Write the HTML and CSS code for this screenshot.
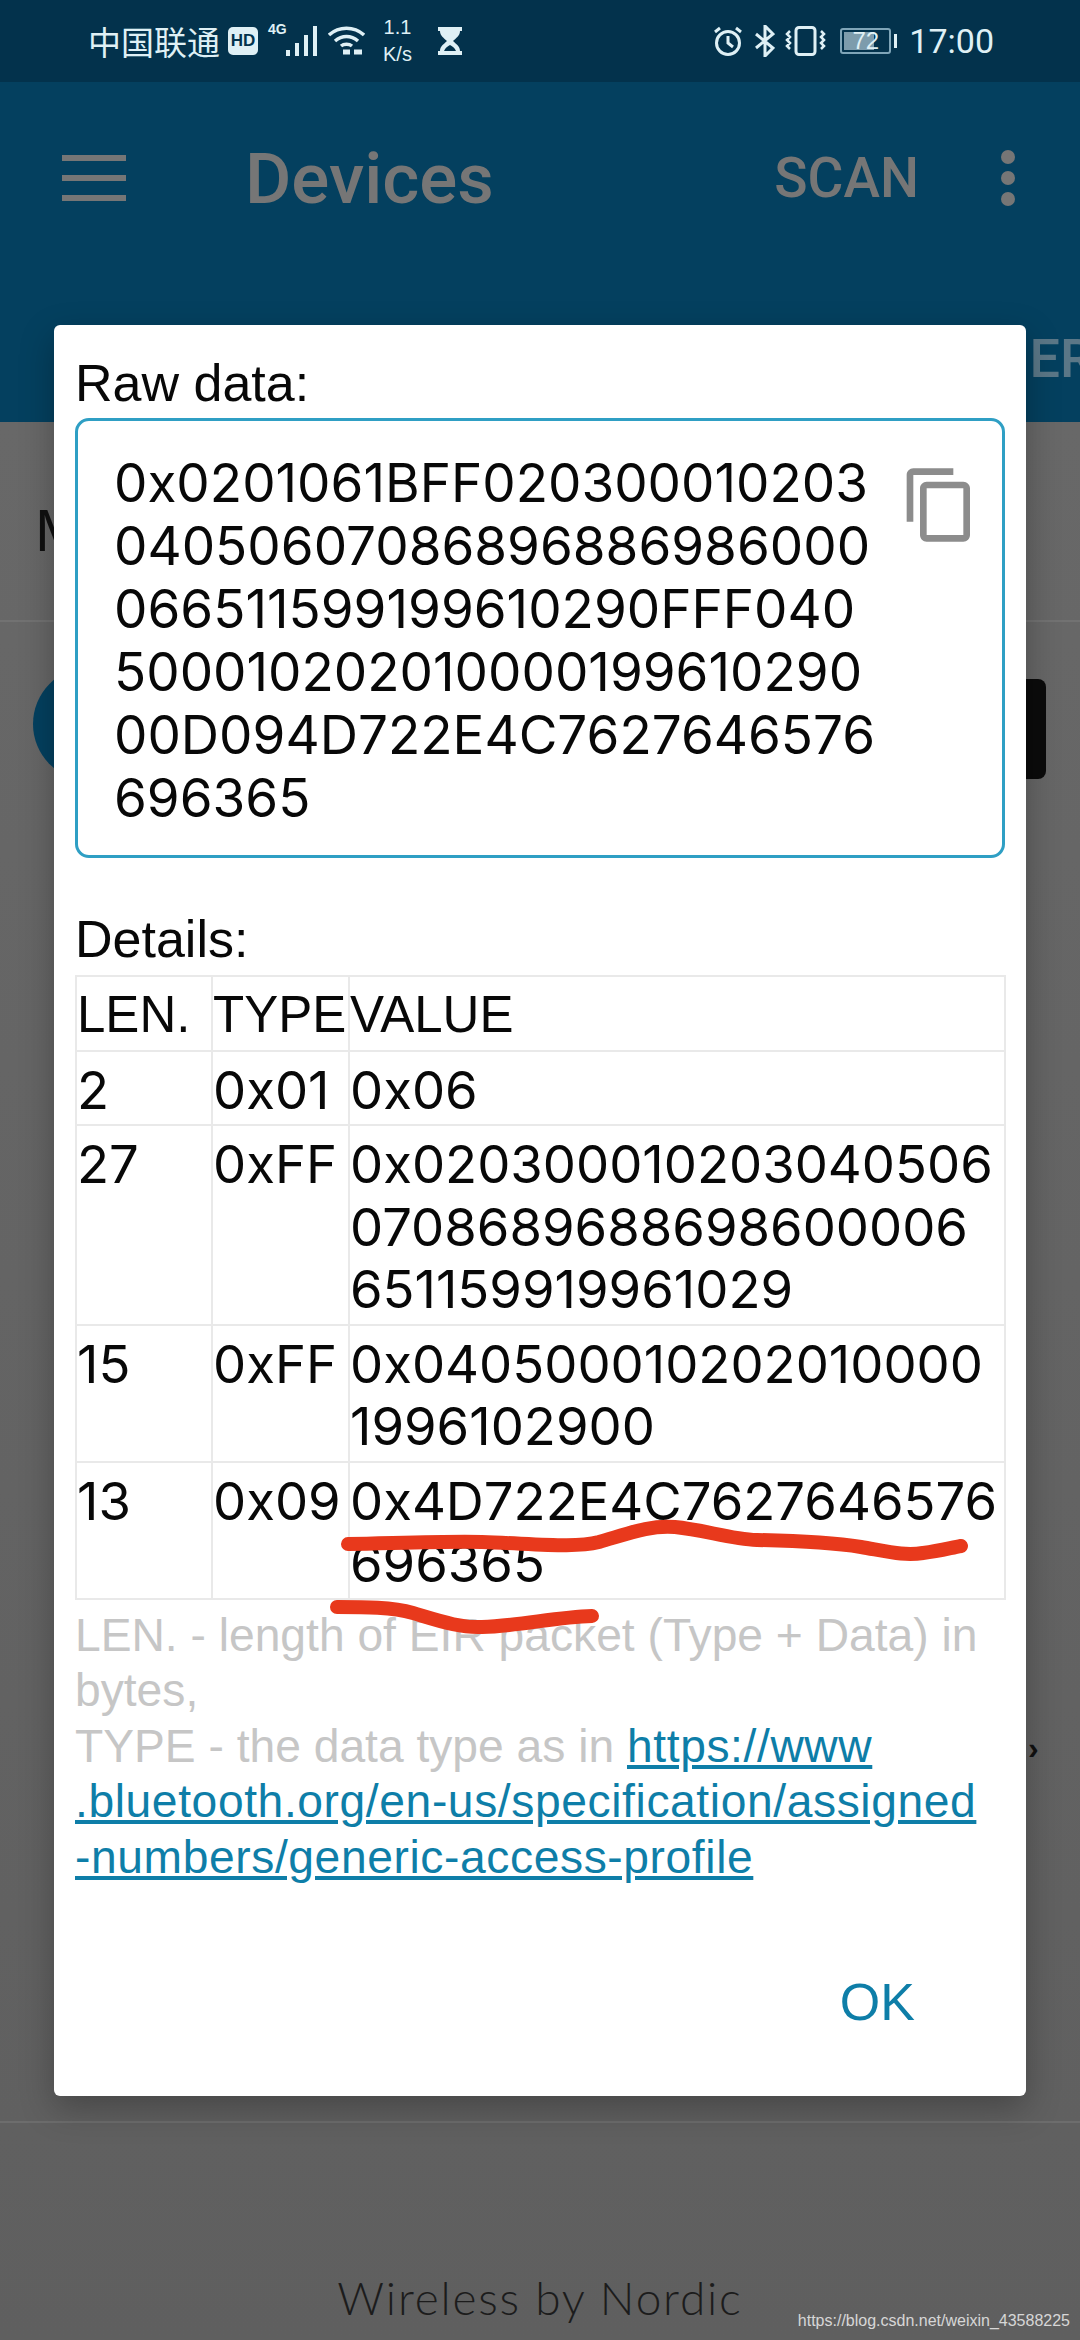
FILE: index.html
```html
<!DOCTYPE html>
<html lang="en">
<head>
<meta charset="UTF-8">
<meta name="viewport" content="width=device-width, initial-scale=1.0">
<title>Devices</title>
<link rel="stylesheet" href="styles.css">
</head>
<body>
<div class="screen">
    <div class="status">
        <div class="status-left">
            <span class="carrier">中国联通</span>
            <span class="hd">HD</span>
            <span class="net">4G</span>
            <svg class="signal" width="32" height="30" viewBox="0 0 32 30"><path d="M0 24h4v6H0zM9 17h4v13H9zM18 9h4v21h-4zM27 0h4v30h-4z" fill="#dff0f5"/></svg>
            <svg class="wifi" width="37" height="30" viewBox="0 0 37 30" fill="none" stroke="#dff0f5" stroke-width="3.5"><path d="M1 9C11 0 26 0 36 9M7 15c7-6 16-6 23 0M13 20c3-2.500 8-2.500 11 0"/><path d="M15 26h7M26 26h8" stroke-width="5"/></svg>
            <span class="speed"><span>1.1</span><span>K/s</span></span>
            <svg class="hourglass" width="24" height="28" viewBox="0 0 24 28"><path d="M0 0h24v4h-2c0 5-4 7-7 10 3 3 7 5 7 10h2v4H0v-4h2c0-5 4-7 7-10C6 11 2 9 2 4H0z" fill="#dff0f5"/><path d="M6 24c1-3 4-5 6-6 2 1 5 3 6 6z" fill="#03324c"/></svg>
        </div>
        <div class="status-right">
            <svg width="30" height="30" viewBox="0 0 30 30" fill="none" stroke="#dff0f5" stroke-width="3"><circle cx="15" cy="17" r="11.500"/><path d="M15 10v7l5 4M2 6l5-4M28 6l-5-4"/></svg>
            <svg class="bt" width="20" height="32" viewBox="0 0 20 32" fill="none" stroke="#dff0f5" stroke-width="3"><path d="M1 9l17 14-8 8V1l8 8L1 23"/></svg>
            <svg class="vibrate" width="41" height="30" viewBox="0 0 41 30" fill="none" stroke="#dff0f5" stroke-width="3"><rect x="11" y="1.500" width="19" height="27" rx="3"/><path d="M5 5l-3 3 3 3-3 3 3 3-3 3 3 3M36 5l3 3-3 3 3 3-3 3 3 3-3 3" stroke-width="2.500"/></svg>
            <div class="battery"><div class="battery-fill"></div><span class="battery-num">72</span></div>
            <div class="battery-nub"></div>
            <span class="clock">17:00</span>
        </div>
    </div>

    <div class="appbar">
        <div class="toolbar">
            <div class="menu"><i></i><i></i><i></i></div>
            <span class="title">Devices</span>
            <span class="scan">SCAN</span>
            <div class="more"><i></i><i></i><i></i></div>
        </div>
        <div class="tab-hint">ER</div>
    </div>

    <div class="list">
        <div class="list-head">M</div>
        <div class="device">
            <div class="device-icon"></div>
            <div class="connect"></div>
        </div>
        <div class="chevron">›</div>
    </div>

    <div class="footer">Wireless by Nordic</div>

    <div class="dialog">
        <div class="label label-raw">Raw data:</div>
        <div class="raw-box">
            <div class="raw-text">
                <div>0x0201061BFF020300010203</div>
                <div>04050607086896886986000</div>
                <div>066511599199610290FFF040</div>
                <div>500010202010000199610290</div>
                <div>00D094D722E4C7627646576</div>
                <div>696365</div>
            </div>
            <svg class="copy" width="80" height="80" viewBox="0 0 24 24"><path d="M16 1H4c-1.100 0-2 .9-2 2v14h2V3h12V1zm3 4H8c-1.100 0-2 .9-2 2v14c0 1.100.9 2 2 2h11c1.100 0 2-.9 2-2V7c0-1.100-.9-2-2-2zm0 16H8V7h11v14z" fill="#8c8c8c"/></svg>
        </div>
        <div class="label label-details">Details:</div>
        <table class="details">
            <tr class="head"><td class="col-len">LEN.</td><td class="col-type">TYPE</td><td>VALUE</td></tr>
            <tr><td>2</td><td>0x01</td><td>0x06</td></tr>
            <tr><td>27</td><td>0xFF</td><td><div>0x020300010203040506</div><div>0708689688698600006</div><div>651159919961029</div></td></tr>
            <tr><td>15</td><td>0xFF</td><td><div>0x040500010202010000</div><div>1996102900</div></td></tr>
            <tr><td>13</td><td>0x09</td><td><div>0x4D722E4C7627646576</div><div>696365</div></td></tr>
        </table>
        <div class="legend">
            <div>LEN. - length of EIR packet (Type + Data) in</div>
            <div>bytes,</div>
            <div>TYPE - the data type as in <a href="#">https://www</a></div>
            <div><a href="#">.bluetooth.org/en-us/specification/assigned</a></div>
            <div><a href="#">-numbers/generic-access-profile</a></div>
        </div>
        <div class="actions"><span class="ok">OK</span></div>
    </div>

    <!-- red marker strokes drawn over the screenshot -->
    <svg class="marks" width="1080" height="2340" viewBox="0 0 1080 2340" fill="none" stroke="#e8391c" stroke-linecap="round">
        <path d="M348 1544C400 1543 450 1541 482 1542C540 1544 575 1548 599 1542C630 1533 650 1525 675 1527C705 1530 730 1539 757 1540C800 1541 835 1543 861 1547C890 1552 905 1556 923 1553C940 1551 950 1548 961 1546" stroke-width="14"/>
        <path d="M337 1607C365 1607 392 1607 413 1613C440 1621 460 1628 482 1627C520 1626 555 1617 592 1616" stroke-width="14"/>
    </svg>

    <div class="watermark">https://blog.csdn.net/weixin_43588225</div>
</div>
</body>
</html>
```

FILE: styles.css
```css
* {
    box-sizing: border-box;
}
body {
    margin: 0;
    font-family: "Liberation Sans", Arial, sans-serif;
    background-color: #666;
}
.screen {
    position: relative;
    width: 1080px;
    height: 2340px;
    overflow: hidden;
    display: flex;
    flex-direction: column;
    background: linear-gradient(#6a6a6a, #5f5f5f);
}

/* status bar */
.status {
    height: 82px;
    flex: none;
    background-color: #03324c;
    color: #dff0f5;
    display: flex;
    justify-content: space-between;
    align-items: center;
    padding: 0 86px 0 88px;
}
.status-left, .status-right {
    display: flex;
    align-items: center;
}
.carrier {
    font-family: "Noto Sans CJK SC", sans-serif;
    font-size: 33px;
    line-height: 40px;
    width: 140px;
}
.hd {
    width: 30px;
    height: 28px;
    background-color: #dff0f5;
    color: #03324c;
    border-radius: 5px;
    font-size: 17px;
    font-weight: bold;
    line-height: 28px;
    text-align: center;
}
.net {
    font-size: 14px;
    font-weight: bold;
    width: 18px;
    margin-left: 10px;
    align-self: flex-start;
    margin-top: 7px;
}
.signal {
    margin-right: 10px;
}
.speed {
    display: flex;
    flex-direction: column;
    align-items: center;
    font-size: 20px;
    line-height: 27px;
    margin: 0 26px 0 18px;
}
.status-right svg {
    margin-right: 12px;
}
.status-right .bt {
    margin-right: 10px;
}
.status-right .vibrate {
    margin-right: 14px;
}
.battery {
    position: relative;
    width: 51px;
    height: 26px;
    border: 2px solid #7fa5b8;
    border-radius: 3px;
    padding: 2px;
}
.battery-fill {
    width: 70%;
    height: 100%;
    background-color: #7d9cac;
}
.battery-num {
    position: absolute;
    left: 0;
    right: 0;
    top: -1px;
    text-align: center;
    font-size: 24px;
    line-height: 24px;
}
.battery-nub {
    width: 3px;
    height: 14px;
    background-color: #dff0f5;
    margin: 0 12px 0 3px;
}
.clock {
    font-family: Roboto, sans-serif;
    font-size: 34px;
}

/* app bar behind the dialog */
.appbar {
    height: 340px;
    flex: none;
    background-color: #04405f;
    color: #767676;
}
.toolbar {
    height: 192px;
    display: flex;
    align-items: center;
    padding: 0 62px;
}
.menu {
    width: 64px;
    display: flex;
    flex-direction: column;
    gap: 14px;
    margin-right: 119px;
}
.menu i {
    display: block;
    height: 6px;
    background-color: #767676;
}
.title {
    font-family: Roboto, sans-serif;
    font-size: 71px;
    font-weight: 500;
    flex: 1;
}
.scan {
    font-family: Roboto, sans-serif;
    font-size: 55px;
    font-weight: 500;
    margin-right: 82px;
}
.more {
    display: flex;
    flex-direction: column;
    gap: 7px;
    margin-right: 3px;
}
.more i {
    display: block;
    width: 14px;
    height: 14px;
    border-radius: 50%;
    background-color: #767676;
}
.tab-hint {
    text-align: right;
    font-family: Roboto, sans-serif;
    font-size: 54px;
    font-weight: 500;
    line-height: 50px;
    margin-top: 60px;
    margin-right: -14px;
    color: #5b7787;
}

/* list behind the dialog */
.list {
    flex: 1;
    position: relative;
}
.list-head {
    height: 200px;
    border-bottom: 2px solid #727272;
    padding: 74px 0 0 35px;
    font-size: 60px;
    color: #111;
}
.device {
    display: flex;
    justify-content: space-between;
    align-items: flex-start;
    padding: 45px 34px 0 33px;
}
.device-icon {
    width: 114px;
    height: 114px;
    border-radius: 50%;
    background-color: #04405f;
}
.connect {
    width: 160px;
    height: 100px;
    margin-top: 12px;
    border-radius: 8px;
    background-color: #0b0b0b;
}
.chevron {
    position: absolute;
    left: 1028px;
    top: 1308px;
    font-size: 32px;
    font-weight: bold;
    color: #111;
}
.footer {
    height: 219px;
    flex: none;
    border-top: 2px solid #6d6d6d;
    padding-top: 150px;
    text-align: center;
    font-family: Lato, sans-serif;
    font-size: 46px;
    font-weight: 300;
    letter-spacing: 1.800px;
    line-height: 50px;
    color: #1c1c1c;
}

/* dialog */
.dialog {
    position: absolute;
    left: 54px;
    top: 325px;
    width: 972px;
    height: 1771px;
    background-color: #fff;
    border-radius: 6px;
    padding: 0 21px;
    box-shadow: 0 12px 34px rgba(0, 0, 0, 0.28);
    color: #080808;
}
.label {
    font-size: 52px;
    line-height: 60px;
}
.label-raw {
    padding-top: 28px;
    height: 93px;
}
.label-details {
    margin-top: 51px;
    height: 66px;
}
.raw-box {
    height: 440px;
    border: 3px solid #2f9fc4;
    border-radius: 14px;
    padding: 31px 0 0 36px;
    display: flex;
    justify-content: space-between;
}
.raw-text {
    font-family: Inter, sans-serif;
    font-size: 53px;
    line-height: 63px;
    white-space: nowrap;
}
.copy {
    margin: 13px 22px 0 0;
}
.details {
    width: 931px;
    border-collapse: collapse;
    font-family: Inter, sans-serif;
    font-size: 52.600px;
    line-height: 62.500px;
}
.details td {
    border: 2px solid #e9e9e9;
    padding: 7px 0 3px 0;
    vertical-align: top;
    white-space: nowrap;
}
.details .head td {
    font-family: "Liberation Sans", Arial, sans-serif;
    font-size: 51px;
}
.col-len {
    width: 136px;
}
.col-type {
    width: 137px;
}
.legend {
    font-size: 46.200px;
    line-height: 55.500px;
    color: #c6c6c6;
    white-space: nowrap;
    margin-top: 8px;
}
.legend a {
    color: #0e7ea8;
    letter-spacing: 0.600px;
}
.actions {
    display: flex;
    justify-content: flex-end;
    padding: 87px 90px 0 0;
}
.ok {
    font-size: 52px;
    line-height: 60px;
    color: #0e7ea8;
}

.marks {
    position: absolute;
    left: 0;
    top: 0;
}
.watermark {
    position: absolute;
    right: 10px;
    top: 2308px;
    font-size: 16px;
    line-height: 26px;
    color: rgba(255, 255, 255, 0.75);
}
```
